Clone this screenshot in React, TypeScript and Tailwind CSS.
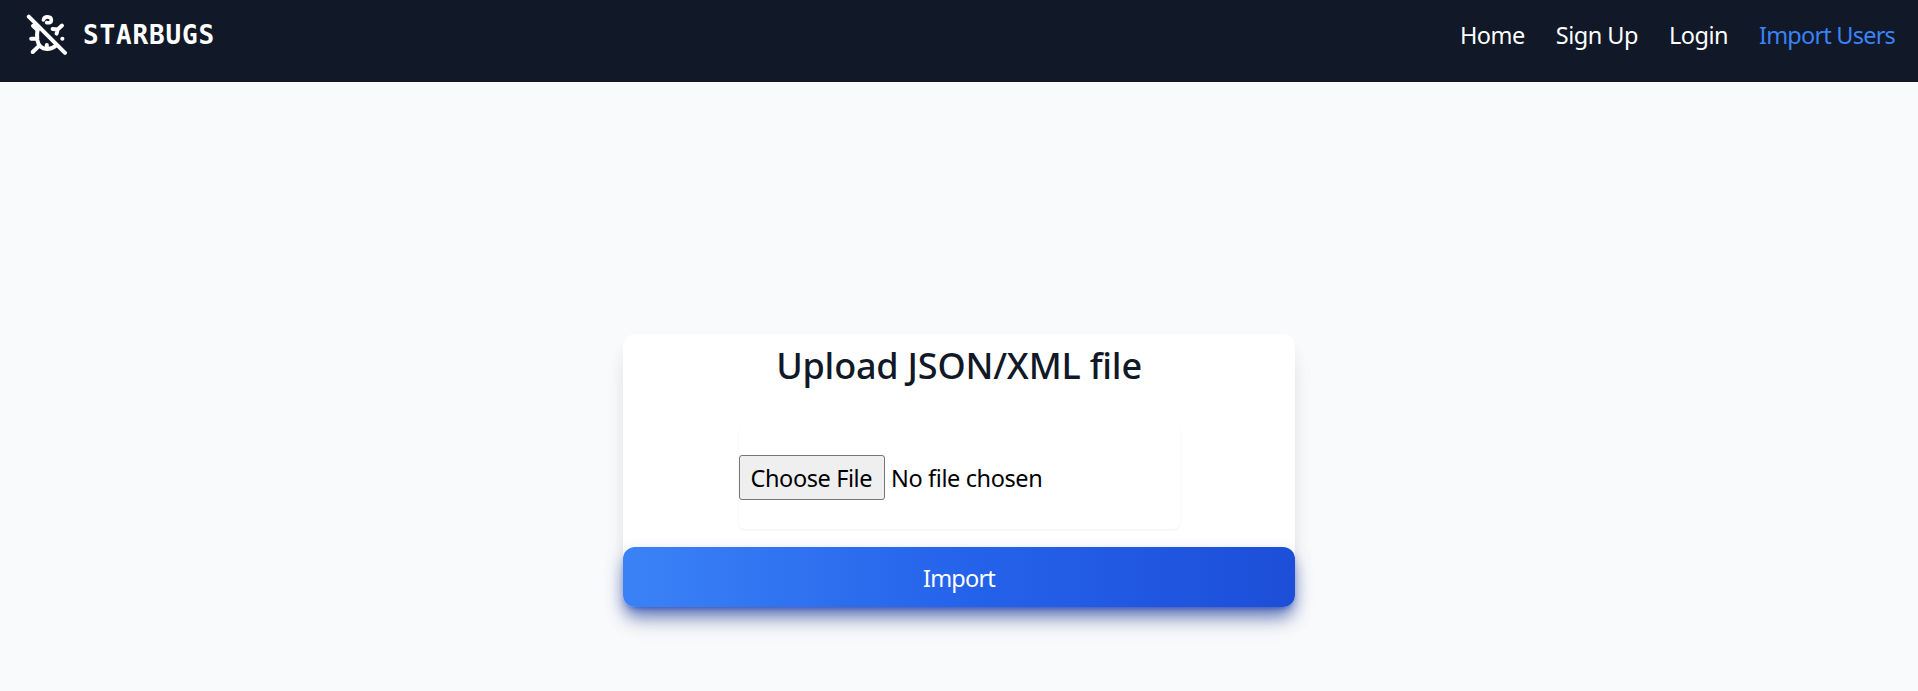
const links = ["Home", "Sign Up", "Login"];

function BugOffIcon() {
  return (
    <svg
      className="h-[42px] w-[42px] shrink-0"
      viewBox="0 0 42 42"
      fill="none"
      stroke="currentColor"
      strokeWidth="4"
      strokeLinecap="round"
      strokeLinejoin="round"
    >
      <path d="M2.8 2.7L39 38.8" />
      <path d="M17.4 5.9C18.4 1.8 25.2 1.9 25.4 6.3C25.4 8.8 23.2 9 20.6 8.6" strokeWidth="3.6" />
      <path d="M36 11.6L31.6 15.4L26.6 14.9M31.6 15.4L30.6 19.6" />
      <path d="M7 11.8L11.5 16" />
      <path d="M5.2 24.7H10" />
      <path d="M6.7 38L12.5 32.4" />
      <path d="M11.8 14.8C10.9 18.5 10.8 22 11.3 26C12.3 31.4 15.8 34.9 21 34.9C24.5 34.9 27.2 34 29.4 32" />
      <path d="M20.8 31V34" />
      <path d="M36.3 24.7H36.4" />
    </svg>
  );
}

export default function App() {
  return (
    <div className="flex h-[691px] flex-col bg-[#f9fafc] font-['Noto_Sans','Open_Sans',sans-serif] text-2xl text-[#111827]">
      <header className="flex h-[82px] shrink-0 items-start justify-between bg-[#111827] pr-[23px] pl-[26px] pt-[13px] text-white">
        <a href="#" className="flex items-center">
          <BugOffIcon />
          <span className="ml-[15px] pt-px font-['DejaVu_Sans_Mono',monospace] text-[26px] leading-[42px] font-bold tracking-[0.85px]">
            STARBUGS
          </span>
        </a>
        <nav className="flex gap-[31px] pt-[6px] text-[23.5px] leading-8 tracking-[-0.5px]">
          {links.map((label) => (
            <a key={label} href="#">
              {label}
            </a>
          ))}
          <a href="#" className="tracking-[-0.8px] text-[#3b82f6]">
            Import Users
          </a>
        </nav>
      </header>
      <main className="flex flex-1 justify-center pt-[252px]">
        <form className="flex h-[273px] w-2xl flex-col items-center rounded-xl bg-white shadow-[0_20px_25px_-5px_rgba(0,0,0,0.1),0_8px_16px_-2px_rgba(0,0,0,0.06)]">
          <h1 className="mt-3 text-4xl leading-10 font-medium tracking-[-0.2px]">Upload JSON/XML file</h1>
          <div className="mt-[38px] flex h-[106px] w-[441px] items-center rounded-md pt-px shadow-sm shadow-black/5">
            <input
              type="file"
              className="w-full text-[23.5px] tracking-[-0.4px] text-black file:mr-[6px] file:h-[45px] file:rounded-[3px] file:border file:border-solid file:border-[#767676] file:bg-[#efefef] file:pt-[3px] file:pr-[12px] file:pl-[11px] file:tracking-[-0.4px]"
            />
          </div>
          <button
            type="button"
            className="mt-[18px] h-[60px] w-full shrink-0 rounded-xl bg-linear-to-r/srgb from-[#3b82f6] via-[#2563eb] to-[#1d4ed8] pt-1 text-[23.5px] tracking-[-0.8px] text-white shadow-[0_10px_18px_-2px_rgba(30,64,175,0.7),0_4px_6px_-4px_rgba(30,64,175,0.8)]"
          >
            Import
          </button>
        </form>
      </main>
    </div>
  );
}
